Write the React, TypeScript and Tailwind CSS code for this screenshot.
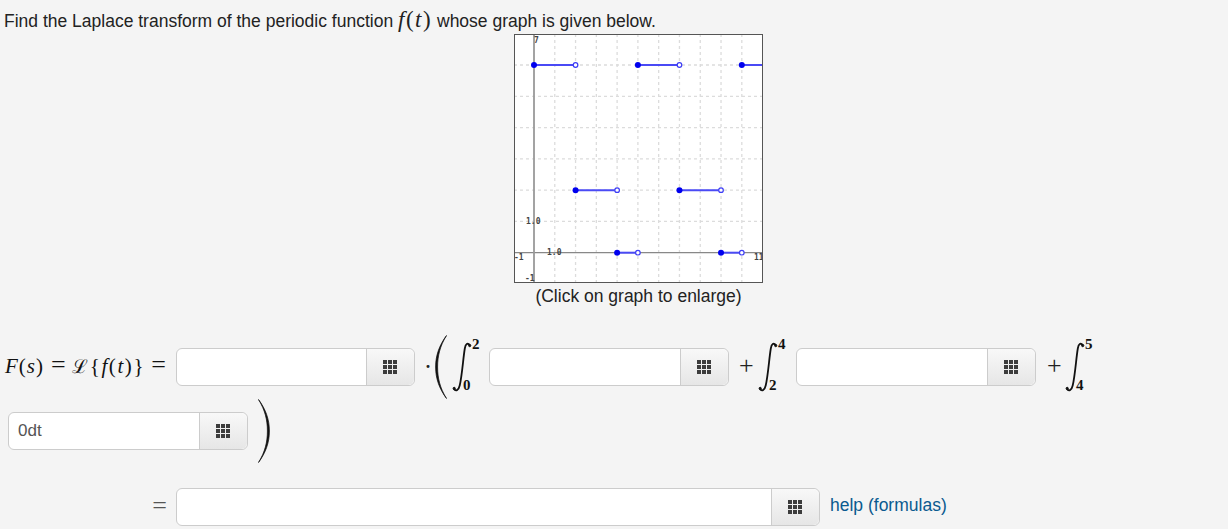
const mathFont = "font-['Liberation_Serif',serif]";

function GridIcon() {
  const cells = [0, 5, 10];
  return (
    <svg width="14" height="14" viewBox="0 0 14 14" fill="#3c3c3c">
      {cells.map((y) => cells.map((x) => <rect key={`${x}-${y}`} x={x} y={y} width="4" height="4" />))}
    </svg>
  );
}

function MathInput({ width, value }: { width: string; value?: string }) {
  return (
    <div className={`flex h-[38px] shrink-0 rounded-md border border-[#ccc] bg-white ${width}`}>
      <div className="flex min-w-0 flex-1 items-center pl-[9px] text-[17px] text-[#555]">{value}</div>
      <div className="flex w-[48px] items-center justify-center rounded-r-md border-l border-[#ccc] bg-gradient-to-b from-[#f8f8f8] to-[#e6e6e6] pr-[2px]">
        <GridIcon />
      </div>
    </div>
  );
}

function Integral({ upper, lower }: { upper: string; lower: string }) {
  return (
    <div className={`relative h-[38px] w-[37px] shrink-0 ${mathFont} text-[15px] font-bold leading-none text-[#111]`}>
      <svg className="absolute left-0 top-[-6px]" width="20" height="50" viewBox="0 0 20 50" fill="none" stroke="#111">
        <path d="M18 3.2C15.5 .5 13.6 1.5 12.8 6.5 11.2 16 10 34 7.7 43.5 6.6 48.6 3.6 49.6 1.8 46.8" strokeWidth="1.8" />
        <circle cx="17.7" cy="3.6" r="1.1" fill="#111" />
        <circle cx="2.2" cy="46.4" r="1.1" fill="#111" />
      </svg>
      <span className="absolute left-[20px] top-[-11px]">{upper}</span>
      <span className="absolute left-[11px] top-[30px]">{lower}</span>
    </div>
  );
}

function Paren({ right, className }: { right?: boolean; className?: string }) {
  return (
    <svg
      className={`shrink-0 ${right ? "-scale-x-100" : ""} ${className ?? ""}`}
      width="12"
      height="64"
      viewBox="0 0 12 64"
      fill="#111"
      stroke="#111"
      strokeWidth=".7"
    >
      <path d="M11.5 .5C4.5 10 .6 20 .6 32S4.5 54 11.5 63.5C5 53 2.6 43 2.6 32S5 11 11.5 .5Z" />
    </svg>
  );
}

function Plus() {
  return <span className={`${mathFont} text-[26px] leading-none text-[#222]`}>+</span>;
}

function Graph() {
  const ux = 20.78;
  const uy = 31.28;
  const px = (t: number) => 20 + t * ux;
  const py = (v: number) => 218.7 - v * uy;
  const segments = [
    [0, 2, 6],
    [2, 4, 2],
    [4, 5, 0],
    [5, 7, 6],
    [7, 9, 2],
    [9, 10, 0],
  ];
  return (
    <svg width="249" height="249" viewBox="0 0 249 249" className="block bg-white">
      {[-1, 1, 2, 3, 4, 5, 6, 7, 8, 9, 10].map((t) => (
        <line key={t} x1={px(t)} x2={px(t)} y1="0" y2="249" stroke="#dcdcdc" strokeWidth="1.3" strokeDasharray="3 3" />
      ))}
      {[1, 2, 3, 4, 5, 6].map((v) => (
        <line key={v} x1="0" x2="249" y1={py(v)} y2={py(v)} stroke="#dcdcdc" strokeWidth="1.3" strokeDasharray="3 3" />
      ))}
      <line x1="0" x2="249" y1={py(0)} y2={py(0)} stroke="#888" strokeWidth="1.3" />
      <line x1={px(0)} x2={px(0)} y1="0" y2="249" stroke="#999" strokeWidth="1.8" />
      {segments.map(([a, b, v]) => (
        <g key={a}>
          <line x1={px(a)} x2={px(b)} y1={py(v)} y2={py(v)} stroke="#4a4af5" strokeWidth="2" />
          <circle cx={px(a)} cy={py(v)} r="3" fill="#0000ee" />
          <circle cx={px(b)} cy={py(v)} r="2.3" fill="#fff" stroke="#3d3df5" strokeWidth="1.2" />
        </g>
      ))}
      <line x1={px(10)} x2="249" y1={py(6)} y2={py(6)} stroke="#4a4af5" strokeWidth="2" />
      <circle cx={px(10)} cy={py(6)} r="3" fill="#0000ee" />
      <g fontFamily="'DejaVu Sans Mono', monospace" fontSize="8" fontWeight="700" fill="#444">
        <text x="20" y="9">7</text>
        <text x="12" y="190">1.0</text>
        <text x="33" y="221">1.0</text>
        <text x="0" y="226">-1</text>
        <text x="240" y="226">11</text>
        <text x="11" y="247">-1</text>
      </g>
      <rect x=".5" y=".5" width="248" height="248" fill="none" stroke="#555" />
    </svg>
  );
}

export default function App() {
  return (
    <div className="h-[529px] w-[1228px] overflow-hidden bg-[#f4f4f4] font-['Liberation_Sans',sans-serif] text-[17.5px] text-[#222]">
      <p className="h-[34px] whitespace-pre pl-[4px] pt-[8px] leading-[24px]">
        Find the Laplace transform of the periodic function{" "}
        <span className={`${mathFont} text-[23px] italic leading-none tracking-[1.5px]`}>
          f<span className="not-italic">(</span>t<span className="not-italic">)</span>
        </span>{" "}
        whose graph is given below.
      </p>

      <div className="ml-[514px] flex w-[249px] flex-col items-center">
        <Graph />
        <span className="mt-px leading-[24px]">(Click on graph to enlarge)</span>
      </div>

      <div className="mt-[40px] flex h-[38px] items-center">
        <div className={`flex w-[176px] items-baseline whitespace-pre pl-[5px] ${mathFont} text-[21px] text-[#111]`}>
          <span className="tracking-[1px]">
            <i>F</i>(<i>s</i>)
          </span>
          <span className="ml-[7px] text-[26px] leading-none">=</span>
          <span className="ml-[6px] text-[19px] font-['DejaVu_Serif',serif]">ℒ</span>
          <span className="ml-[2px] tracking-[1.6px]">
            {"{"}
            <i>f</i>(<i>t</i>){"}"}
          </span>
          <span className="ml-[6px] text-[26px] leading-none">=</span>
        </div>
        <MathInput width="w-[239px]" />
        <span className={`ml-[10px] ${mathFont} text-[18px] font-bold`}>·</span>
        <Paren className="ml-[4px] -my-[13px]" />
        <span className="w-[5px]" />
        <Integral upper="2" lower="0" />
        <MathInput width="w-[240px]" />
        <span className="ml-[10px] w-[19px]">
          <Plus />
        </span>
        <Integral upper="4" lower="2" />
        <span className="w-px" />
        <MathInput width="w-[240px]" />
        <span className="ml-[11px] w-[18px]">
          <Plus />
        </span>
        <Integral upper="5" lower="4" />
      </div>

      <div className="mt-[26px] flex h-[38px] items-center pl-[8px]">
        <MathInput width="w-[240px]" value="0dt" />
        <Paren right className="ml-[10px] -my-[13px]" />
      </div>

      <div className="mt-[38px] flex h-[38px] items-center">
        <div className={`mb-[3px] flex w-[176px] justify-end pr-[9px] ${mathFont} text-[26px] leading-none text-[#555]`}>=</div>
        <MathInput width="w-[644px]" />
        <span className="mb-[3px] ml-[10px] text-[#0a5a8f]">help (formulas)</span>
      </div>
    </div>
  );
}
